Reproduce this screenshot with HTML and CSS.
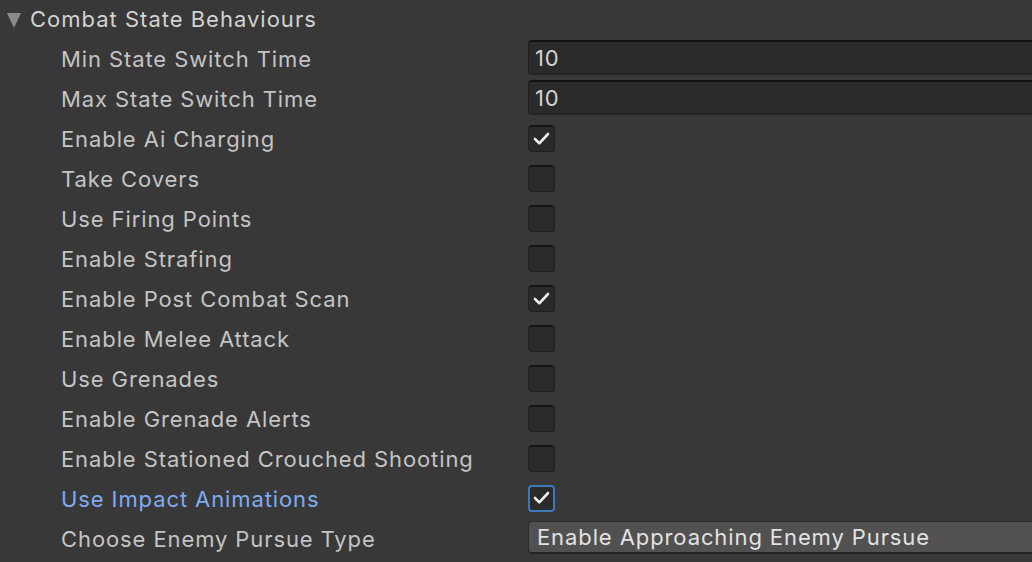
FILE: index.html
```html
<!DOCTYPE html>
<html>
<head>
<meta charset="utf-8">
<link rel="stylesheet" href="styles.css">
</head>
<body>
<div class="panel">
  <div class="row header">
    <span class="foldout"></span>
    <span class="title">Combat State Behaviours</span>
  </div>
  <div class="row"><span class="label">Min State Switch Time</span><div class="value"><div class="field">10</div></div></div>
  <div class="row"><span class="label">Max State Switch Time</span><div class="value"><div class="field">10</div></div></div>
  <div class="row"><span class="label">Enable Ai Charging</span><div class="value"><div class="check on"><svg viewBox="0 0 27 27"><polyline points="7,14 11.3,18.3 20,9"/></svg></div></div></div>
  <div class="row"><span class="label">Take Covers</span><div class="value"><div class="check"></div></div></div>
  <div class="row"><span class="label">Use Firing Points</span><div class="value"><div class="check"></div></div></div>
  <div class="row"><span class="label">Enable Strafing</span><div class="value"><div class="check"></div></div></div>
  <div class="row"><span class="label">Enable Post Combat Scan</span><div class="value"><div class="check on"><svg viewBox="0 0 27 27"><polyline points="7,14 11.3,18.3 20,9"/></svg></div></div></div>
  <div class="row"><span class="label">Enable Melee Attack</span><div class="value"><div class="check"></div></div></div>
  <div class="row"><span class="label">Use Grenades</span><div class="value"><div class="check"></div></div></div>
  <div class="row"><span class="label">Enable Grenade Alerts</span><div class="value"><div class="check"></div></div></div>
  <div class="row"><span class="label">Enable Stationed Crouched Shooting</span><div class="value"><div class="check"></div></div></div>
  <div class="row"><span class="label modified">Use Impact Animations</span><div class="value"><div class="check on focus"><svg viewBox="0 0 27 27"><polyline points="7,14 11.3,18.3 20,9"/></svg></div></div></div>
  <div class="row"><span class="label">Choose Enemy Pursue Type</span><div class="value"><div class="dropdown">Enable Approaching Enemy Pursue</div></div></div>
</div>
</body>
</html>
```
FILE: styles.css
```css
html, body {
  margin: 0;
  padding: 0;
  background: #383838;
  width: 1032px;
  height: 562px;
  overflow: hidden;
}
.panel {
  margin-top: -1px;
  font-family: Inter, "Noto Sans", sans-serif;
  font-size: 22px;
  letter-spacing: 0.9px;
  color: #c4c4c4;
  width: 1060px;
}
.row {
  height: 40px;
  display: flex;
  align-items: center;
}
.header {
  padding-left: 7px;
}
.foldout {
  width: 0;
  height: 0;
  border-left: 7.5px solid transparent;
  border-right: 7.5px solid transparent;
  border-top: 15px solid #8a8a8a;
  margin-top: 2px;
  margin-right: 9px;
}
.title {
  color: #d2d2d2;
  letter-spacing: 1px;
}
.label {
  width: 467px;
  padding-left: 61px;
  flex: none;
  white-space: nowrap;
}
.label.modified {
  color: #7fabf1;
}
.value {
  flex: 1;
  display: flex;
  align-items: center;
}
.field {
  box-sizing: border-box;
  height: 35px;
  width: 100%;
  background: #2a2a2a;
  border-top: 2px solid #111111;
  border-left: 1px solid #1f1f1f;
  border-bottom: 2px solid #242424;
  border-radius: 4px;
  padding-left: 6px;
  display: flex;
  align-items: center;
  color: #d2d2d2;
  margin-top: -3px;
}
.check {
  box-sizing: border-box;
  width: 27px;
  height: 27px;
  background: #2a2a2a;
  border: 1px solid #212121;
  border-top: 2px solid #161616;
  border-radius: 4px;
  margin-top: -2px;
  display: flex;
  align-items: center;
  justify-content: center;
}
.check svg {
  width: 27px;
  height: 27px;
  flex: none;
  margin-top: -1px;
}
.check polyline {
  fill: none;
  stroke: #eeeeee;
  stroke-width: 2.6;
  stroke-linecap: round;
  stroke-linejoin: round;
}
.check.focus {
  border: 2px solid #3d78ba;
}
.dropdown {
  box-sizing: border-box;
  height: 33px;
  width: 100%;
  background: #515151;
  border: 1px solid #2b2b2b;
  border-bottom: 2px solid #232323;
  border-radius: 4px;
  padding-left: 8px;
  display: flex;
  align-items: center;
  color: #e2e2e2;
  margin-top: -3px;
}
```
